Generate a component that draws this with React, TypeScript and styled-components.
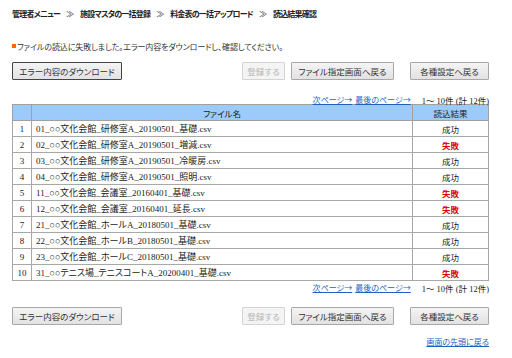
import styled, { createGlobalStyle } from "styled-components"

const GlobalStyle = createGlobalStyle`
  html, body {
    margin: 0;
    padding: 0;
    background: #ffffff;
  }
  body {
    font-family: "Noto Sans CJK JP", sans-serif;
    color: #222;
  }
`

const Page = styled.div`
  width: 477px;
  padding: 0 0 0 12px;
  font-feature-settings: "palt";
`

const Breadcrumb = styled.div`
  height: 26px;
  display: flex;
  align-items: center;
  font-size: 8px;
  font-weight: bold;
  letter-spacing: -0.8px;
  color: #222;
`

const Sep = styled.span`
  font-weight: normal;
  letter-spacing: 0;
  margin: 0 6px;
  color: #444;
`

const Message = styled.div`
  margin-top: 13px;
  height: 14px;
  display: flex;
  align-items: center;
  font-size: 8px;
  letter-spacing: -0.1px;
  color: #333;
`

const Mark = styled.span`
  display: inline-block;
  width: 4px;
  height: 4px;
  background: #ff6600;
  margin-right: 1px;
`

const ButtonRow = styled.div<{ $top: number }>`
  margin-top: ${p => p.$top}px;
  display: flex;
  align-items: center;
  height: 18px;
`

const Button = styled.button<{ $w: number; $focus?: boolean }>`
  width: ${p => p.$w}px;
  height: 18px;
  padding: 0;
  margin: 0;
  box-sizing: border-box;
  border: 1px solid;
  border-radius: 1px;
  font-family: "Noto Sans CJK JP", sans-serif;
  font-feature-settings: "palt";
  font-size: 8.5px;
  color: ${p => (p.disabled ? "#b4b4b4" : "#333")};
  border-color: ${p => (p.disabled ? "#d4d4d4" : p.$focus ? "#444" : "#a8a8a8")};
  background: ${p => (p.disabled ? "#f4f4f4" : "linear-gradient(#f4f4f4, #e2e2e2)")};
`

const Spacer = styled.div`
  flex: 1;
`

const Pager = styled.div<{ $top: number }>`
  margin-top: ${p => p.$top}px;
  height: 9px;
  display: flex;
  justify-content: flex-end;
  align-items: center;
  font-size: 8px;
  color: #222;
`

const PagerLink = styled.a`
  color: #1f5fbf;
  text-decoration: underline;
  margin-right: 3px;
`

const Count = styled.span`
  font-family: "Liberation Serif", "Noto Sans CJK JP", serif;
  font-size: 8.5px;
  margin-left: 8px;
`

const Table = styled.table`
  margin-top: 0;
  width: 477px;
  border-collapse: collapse;
  border: 1px solid #a0a0a0;
  table-layout: fixed;
`

const Th = styled.th<{ $w?: number }>`
  width: ${p => (p.$w ? `${p.$w}px` : "auto")};
  height: 15px;
  padding: 0;
  background: #9ccafa;
  border: 1px solid #a0a0a0;
  font-size: 8.5px;
  font-weight: normal;
  color: #222;
  text-align: center;
`

const Td = styled.td<{ $align?: string; $fail?: boolean }>`
  height: 15px;
  padding: 0 0 0 ${p => (p.$align === "left" ? "4px" : "0")};
  border: 1px solid #a8a8a8;
  text-align: ${p => p.$align || "center"};
  font-family: "Liberation Serif", "Noto Sans CJK JP", serif;
  font-size: 9px;
  color: ${p => (p.$fail ? "#e00000" : "#222")};
  font-weight: ${p => (p.$fail ? "bold" : "normal")};
  white-space: nowrap;
  overflow: hidden;
`

const ResultText = styled.span`
  font-family: "Noto Sans CJK JP", sans-serif;
  font-size: 8.5px;
`

const TopLink = styled.div`
  margin-top: 10px;
  height: 12px;
  display: flex;
  justify-content: flex-end;
  align-items: center;
  font-size: 8px;
`

const rows = [
  { name: "01_○○文化会館_研修室A_20190501_基礎.csv", ok: true },
  { name: "02_○○文化会館_研修室A_20190501_増減.csv", ok: false },
  { name: "03_○○文化会館_研修室A_20190501_冷暖房.csv", ok: true },
  { name: "04_○○文化会館_研修室A_20190501_照明.csv", ok: true },
  { name: "11_○○文化会館_会議室_20160401_基礎.csv", ok: false },
  { name: "12_○○文化会館_会議室_20160401_延長.csv", ok: false },
  { name: "21_○○文化会館_ホールA_20180501_基礎.csv", ok: true },
  { name: "22_○○文化会館_ホールB_20180501_基礎.csv", ok: true },
  { name: "23_○○文化会館_ホールC_20180501_基礎.csv", ok: true },
  { name: "31_○○テニス場_テニスコートA_20200401_基礎.csv", ok: false },
]

const Buttons = ({ top, focus }: { top: number; focus?: boolean }) => (
  <ButtonRow $top={top}>
    <Button $w={110} $focus={focus}>エラー内容のダウンロード</Button>
    <Spacer />
    <Button $w={43} disabled>登録する</Button>
    <Button $w={103} style={{ marginLeft: 6 }}>ファイル指定画面へ戻る</Button>
    <Button $w={79} style={{ marginLeft: 16 }}>各種設定へ戻る</Button>
  </ButtonRow>
)

const PagerBar = ({ top }: { top: number }) => (
  <Pager $top={top}>
    <PagerLink href="#">次ページ→</PagerLink>
    <PagerLink href="#">最後のページ→</PagerLink>
    <Count>1～ 10件 (計 12件)</Count>
  </Pager>
)

const App = () => {
  return (
    <>
      <GlobalStyle />
      <Page>
        <Breadcrumb>
          管理者メニュー<Sep>≫</Sep>施設マスタの一括登録<Sep>≫</Sep>料金表の一括アップロード<Sep>≫</Sep>読込結果確認
        </Breadcrumb>
        <Message>
          <Mark />
          ファイルの読込に失敗しました。エラー内容をダウンロードし、確認してください。
        </Message>
        <Buttons top={9} focus />
        <PagerBar top={15} />
        <Table>
          <thead>
            <tr>
              <Th $w={18}></Th>
              <Th>ファイル名</Th>
              <Th $w={75}>読込結果</Th>
            </tr>
          </thead>
          <tbody>
            {rows.map((r, i) => (
              <tr key={i}>
                <Td>{i + 1}</Td>
                <Td $align="left">{r.name}</Td>
                <Td $fail={!r.ok}>
                  <ResultText>{r.ok ? "成功" : "失敗"}</ResultText>
                </Td>
              </tr>
            ))}
          </tbody>
        </Table>
        <PagerBar top={2} />
        <Buttons top={15} />
        <TopLink>
          <PagerLink href="#" style={{ marginRight: 0 }}>画面の先頭に戻る</PagerLink>
        </TopLink>
      </Page>
    </>
  )
}

export default App
